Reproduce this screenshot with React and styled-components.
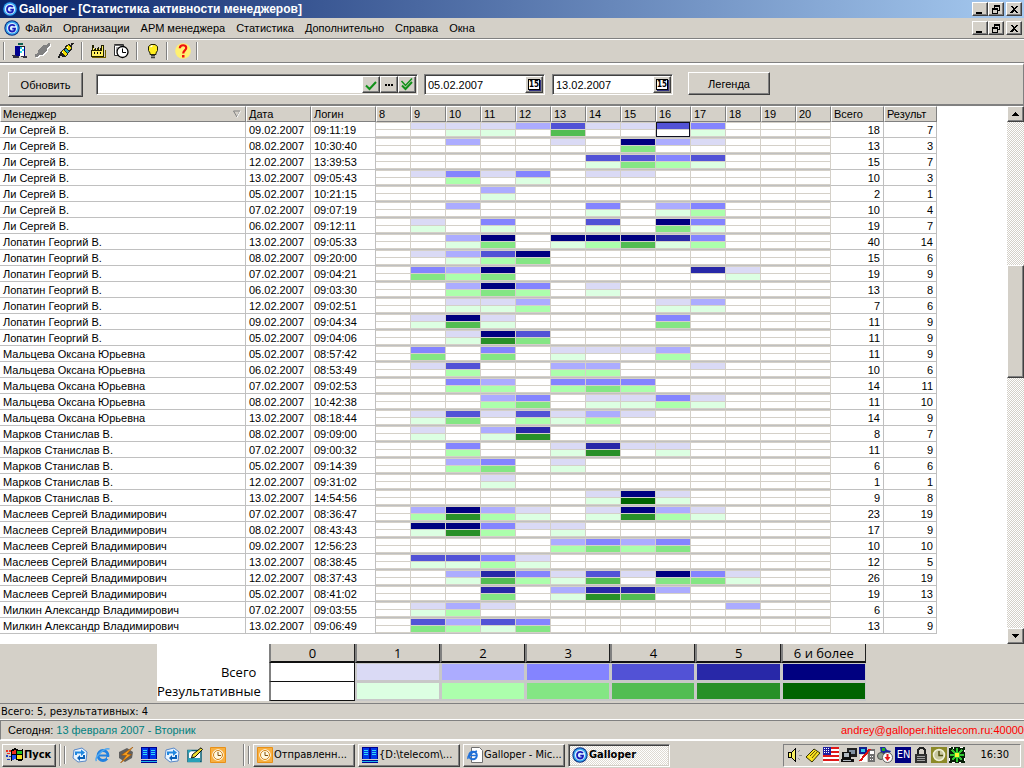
import React from 'react';
import styled, { createGlobalStyle, css } from 'styled-components';

const FACE = '#d4d0c8';
const SHADOW = '#808080';
const DARK = '#404040';
const UI = '"Liberation Sans", Arial, sans-serif';
const TAHOMA = '"DejaVu Sans Condensed", "DejaVu Sans", Tahoma, sans-serif';
const SMOOTH = '"Open Sans", "Noto Sans", sans-serif';

const BLUES = ['#ffffff', '#dadaf5', '#acacff', '#8484ff', '#5252d6', '#2828a8', '#000080'];
const GREENS = ['#ffffff', '#dcffe2', '#acffac', '#84e684', '#52bd52', '#289028', '#006400'];

const Global = createGlobalStyle`
  *, *::before, *::after { box-sizing: border-box; }
  body { margin: 0; background: ${FACE}; color: #000; font: 11px/14px ${UI}; }
  button, input { font: inherit; color: inherit; border-radius: 0; }
  a { color: inherit; text-decoration: none; }
  svg { display: block; flex: none; }
`;

const raised = css`
  border: 1px solid;
  border-color: #fff ${DARK} ${DARK} #fff;
  box-shadow: inset -1px -1px 0 ${SHADOW};
`;
const sunken = css`
  border: 1px solid;
  border-color: ${SHADOW} #fff #fff ${SHADOW};
  box-shadow: inset 1px 1px 0 ${DARK}, inset -1px -1px 0 ${FACE};
`;

const Shell = styled.div`
  min-height: 100vh;
  display: flex;
  flex-direction: column;
  background: ${FACE};
`;
const TitleBar = styled.header`
  height: 18px;
  display: flex;
  align-items: center;
  gap: 1px;
  padding: 0 2px;
  background: linear-gradient(90deg, #0a246a, #a6caf0);
  color: #fff;
`;
const TitleText = styled.h1`
  flex: 1;
  margin: 0;
  font: bold 12px/16px ${UI};
  white-space: nowrap;
`;
const MenuBar = styled.nav`
  height: 21px;
  display: flex;
  align-items: center;
  padding: 0 2px 0 4px;
  border-bottom: 1px solid ${SHADOW};
`;
const MenuItems = styled.div`
  flex: 1;
  display: flex;
  gap: 11px;
  padding-left: 5px;
  white-space: nowrap;
`;
const MenuItem = styled.button`
  padding: 0;
  border: 0;
  background: none;
`;
const WindowButtons = styled.div`
  display: flex;
`;
const WindowButton = styled.button`
  ${raised}
  width: 16px;
  height: 14px;
  padding: 0;
  margin-left: ${(p) => (p.$apart ? '2px' : '0')};
  display: grid;
  place-items: center;
  background: ${FACE};
`;
const ToolBar = styled.div`
  height: 24px;
  display: flex;
  align-items: center;
  gap: 7px;
  padding: 0 3px;
  border-top: 1px solid #fff;
  border-bottom: 1px solid ${SHADOW};
`;
const ToolButton = styled.button`
  width: ${(p) => p.$w || 16}px;
  height: 16px;
  padding: 0;
  border: 0;
  background: none;
  display: grid;
  place-items: center;
`;
const Divider = styled.span`
  width: 2px;
  height: ${(p) => p.$h || 18}px;
  border-left: 1px solid ${SHADOW};
  border-right: 1px solid #fff;
`;
const FilterPanel = styled.form`
  height: 43px;
  display: flex;
  align-items: flex-start;
  padding: 7px 8px 0;
  border-top: 2px solid #fff;
  border-right: 1px solid ${SHADOW};
  border-bottom: 2px solid ${SHADOW};
`;
const PushButton = styled.button`
  ${raised}
  height: ${(p) => p.$h}px;
  width: ${(p) => p.$w}px;
  padding: 0;
  background: ${FACE};
`;
const Field = styled.div`
  ${sunken}
  display: flex;
  width: ${(p) => p.$w}px;
  height: 21px;
  padding: 1px;
  margin-top: 2px;
  margin-left: ${(p) => p.$gap}px;
  background: #fff;
`;
const TextBox = styled.input`
  flex: 1;
  min-width: 0;
  padding: 0 2px;
  border: 0;
  outline: 0;
  background: transparent;
`;
const FieldButton = styled.button`
  ${raised}
  width: 18px;
  padding: 0;
  display: grid;
  place-items: center;
  background: ${FACE};
`;
const FilterGap = styled.span`
  width: 15px;
`;

const Body = styled.main`
  flex: 1;
  display: flex;
  background: #fff;
`;
const GridArea = styled.div`
  flex: 1;
  min-width: 0;
  overflow: hidden;
  padding-bottom: 9px;
`;
const Grid = styled.table`
  table-layout: fixed;
  width: 937px;
  border-collapse: separate;
  border-spacing: 0;
`;
const Th = styled.th`
  height: 16px;
  padding: 0 2px;
  text-align: left;
  font-weight: normal;
  line-height: 14px;
  white-space: nowrap;
  background: ${FACE};
  border-top: 1px solid #fff;
  border-left: 1px solid #fff;
  border-right: 1px solid ${SHADOW};
  border-bottom: 1px solid ${SHADOW};
`;
const ThInner = styled.span`
  display: flex;
  justify-content: space-between;
  align-items: center;
  padding-right: 2px;
`;
const Td = styled.td`
  height: 16px;
  padding: 1px 3px 0;
  text-align: ${(p) => (p.$num ? 'right' : 'left')};
  line-height: 14px;
  white-space: nowrap;
  border-right: 1px solid #c0c0c0;
  border-bottom: 1px solid #c0c0c0;
`;
const HourTd = styled.td`
  height: 16px;
  padding: 0;
  border-right: 1px solid ${FACE};
  border-bottom: 1px solid #c0c0c0;
`;
const Meter = styled.div`
  height: 15px;
  display: grid;
  grid-template-rows: 6px 6px;
  row-gap: 1px;
  padding: 1px 0;
  background: ${FACE};
  ${(p) => p.$active && css`outline: 1px solid #101020; outline-offset: -1px;`}
`;
const Bar = styled.span`
  background: ${(p) => p.$fill};
`;

const ScrollBar = styled.div`
  width: 17px;
  display: flex;
  flex-direction: column;
  background: repeating-conic-gradient(#fff 0 25%, ${FACE} 0 50%) 0 0 / 2px 2px;
`;
const ScrollButton = styled.button`
  ${raised}
  height: 16px;
  padding: 0;
  display: grid;
  place-items: center;
  background: ${FACE};
`;
const Thumb = styled.div`
  ${raised}
  flex: 111;
  background: ${FACE};
`;
const Space = styled.div`
  flex: ${(p) => p.$grow || 1};
`;

const LegendPanel = styled.section`
  padding: 0 0 2px 157px;
`;
const LegendTable = styled.table`
  table-layout: fixed;
  width: 709px;
  border-collapse: separate;
  border-spacing: 0;
  font: 13px/16px ${SMOOTH};
`;
const LegendHead = styled.th`
  height: 19px;
  padding: 0;
  font-weight: normal;
  background: ${FACE};
  border-left: 2px solid ${SHADOW};
  border-right: 1px solid #202020;
  border-bottom: 2px solid #101010;
`;
const LegendCorner = styled.td`
  padding: 0;
  background: #fff;
`;
const LegendLabel = styled.th`
  height: 19px;
  padding: 0 13px 2px 0;
  text-align: right;
  font-weight: normal;
  background: #fff;
`;
const Swatch = styled.td`
  height: 19px;
  padding: 0;
  background: ${(p) => p.$fill};
  border: solid #c8c8c8;
  border-width: 1px 1px 2px 2px;
  ${(p) => p.$empty && css`border-color: ${SHADOW} #101010 #101010 ${SHADOW}; border-width: 0 1px 1px 2px;`}
`;

const StatusLine = styled.div`
  height: 17px;
  padding: 1px 1px;
  border-top: 1px solid ${SHADOW};
  border-bottom: 1px solid #fff;
  font: 11px/14px ${TAHOMA};
`;
const StatusBar = styled.footer`
  height: 20px;
  display: flex;
  justify-content: space-between;
  align-items: center;
  padding: 0 0 0 7px;
  border-top: 1px solid ${SHADOW};
  border-left: 1px solid ${SHADOW};
  border-bottom: 1px solid #fff;
`;
const Today = styled.time`
  color: #008080;
`;
const Server = styled.a`
  color: #ff0000;
`;
const TaskBar = styled.footer`
  height: 28px;
  display: flex;
  align-items: center;
  gap: 3px;
  padding: 1px 3px 0 2px;
  border-top: 1px solid #fff;
`;
const StartButton = styled.button`
  ${raised}
  width: 54px;
  height: 23px;
  display: flex;
  align-items: center;
  gap: 1px;
  padding: 0 3px;
  background: ${FACE};
  font: bold 11px/14px ${TAHOMA};
`;
const Quick = styled.div`
  display: flex;
  gap: 7px;
  padding: 0 14px 0 3px;
`;
const Tasks = styled.div`
  flex: 1;
  display: flex;
  gap: 3px;
`;
const Task = styled.button`
  ${raised}
  width: 102px;
  height: 23px;
  display: flex;
  align-items: center;
  gap: 1px;
  padding: 0 3px;
  overflow: hidden;
  white-space: nowrap;
  background: ${FACE};
  font: 11px/14px ${TAHOMA};
  ${(p) => p.$active && css`
    ${sunken}
    font-weight: bold;
    background: repeating-conic-gradient(#fff 0 25%, #dedad2 0 50%) 0 0 / 2px 2px;
  `}
`;
const Tray = styled.div`
  height: 23px;
  display: flex;
  align-items: center;
  gap: 2px;
  padding: 0 11px 0 3px;
  border: 1px solid;
  border-color: ${SHADOW} #fff #fff ${SHADOW};
`;
const Lang = styled.span`
  width: 16px;
  height: 16px;
  background: #000080;
  color: #fff;
  font: 11px/16px ${TAHOMA};
  text-align: center;
`;
const Clock = styled.time`
  padding-left: 13px;
  font: 11px/14px ${TAHOMA};
`;

function Svg({ children, crisp = true }) {
  return (
    <svg width="16" height="16" viewBox="0 0 16 16" shapeRendering={crisp ? 'crispEdges' : 'auto'} aria-hidden="true">
      {children}
    </svg>
  );
}
const Logo = () => (
  <Svg crisp={false}>
    <circle cx="8" cy="8" r="7.7" fill="#082a80" />
    <circle cx="8" cy="8" r="6.7" fill="#38a8f0" />
    <circle cx="8" cy="8" r="5.2" fill="#d8f0ff" />
    <path d="M10.800 6.200C10 4.600 6.400 4.300 5.300 6.600C4.300 9 5.600 11.500 8 11.500C10 11.500 11 10.500 11 8.700H8.300" fill="none" stroke="#1818b8" strokeWidth="1.800" />
  </Svg>
);
const Door = () => (
  <Svg>
    <path d="M6 0h5v2H6z" fill="#106050" />
    <path d="M3 3h10v1H3z" fill="#202020" />
    <path d="M3 3h5v10H3z" fill="#000090" />
    <path d="M8 4h4v9H8z" fill="#fff" />
    <path d="M8 4h2v2H8zM10 6h2v2h-2zM8 8h2v2H8z" fill="#30d0e8" />
    <path d="M12 4h1v10h-1z" fill="#000090" />
    <path d="M0 12h4v1H0zM1 13h6v2H1zM9 13h6v1H9zM11 14h4v1h-4z" fill="#303040" />
  </Svg>
);
const PlugOff = () => (
  <Svg>
    <path d="M1 15v-3l3-1V8l5-5h3l3-2h1v2l-3 3v3l-5 4H5l-2 2z" fill="#fff" />
    <path d="M0 14v-3l3-1V7l5-5h3l3-2h1v2l-3 3v3l-5 4H4l-2 2z" fill="#808080" />
  </Svg>
);
const Plug = () => (
  <Svg>
    <path d="M0 15l3-4M12 4l3-4" stroke="#202020" strokeWidth="2" />
    <path d="M2 10l3-4 2-1 1-3 3-1 3 3v3l-3 2-1 3-3 2H4z" fill="#202020" />
    <path d="M3 9l2-2 4 4-2 2zM8 4l2-2 3 3-2 3z" fill="#f0e000" />
    <path d="M6 7l2-2 3 4-2 1z" fill="#20a8b8" />
    <path d="M4 9h1v1H4zM9 4h1v1H9z" fill="#fff" />
  </Svg>
);
const Factory = () => (
  <Svg>
    <path d="M2 2h2v4l2-2v2l3-2v2l2-1V2h3v12H1V7h1z" fill="#202000" />
    <path d="M2 8h11v5H2zM3 5h1v2H3zM6 6h1v1H6zM9 6h1v1H9zM12 3h1v5h-1z" fill="#fff060" />
    <path d="M4 9h1v2H4zM7 9h1v2H7zM10 9h1v2h-1z" fill="#000" />
    <path d="M2 14h13V7" fill="none" stroke="#706000" />
  </Svg>
);
const Schedule = () => (
  <Svg crisp={false}>
    <path d="M1.500 1.500h9v11h-9z" fill="#fff" stroke="#303030" />
    <path d="M1 2.500h9M3 5h5M3 7h4" stroke="#606060" />
    <circle cx="9.500" cy="9" r="5.500" fill="#fff" stroke="#000" strokeWidth="1.300" />
    <path d="M9.500 5.500V9.500H13" fill="none" stroke="#000" />
  </Svg>
);
const Bulb = () => (
  <Svg crisp={false}>
    <path d="M5 10L3.500 7.500V3.500L6 1.500h4l2.500 2v4L11 10v1.500H5z" fill="#ffee20" stroke="#202000" />
    <path d="M5.500 4l2-1.500" stroke="#fff" strokeWidth="1.500" />
    <path d="M6 12.500h4M6 14.500h4" stroke="#404040" strokeWidth="1.500" />
  </Svg>
);
const Help = () => (
  <Svg crisp={false}>
    <circle cx="8" cy="8" r="7.800" fill="#fff070" />
    <path d="M4.800 5.200C5 1.300 11.400 1.300 11.200 5C11.100 7.500 8.200 7.200 8.200 10.500" fill="none" stroke="#f01010" strokeWidth="2.200" />
    <path d="M7 12h2.500v2.500H7z" fill="#f01010" />
  </Svg>
);
const Check = ({ twice }) => (
  <Svg crisp={false}>
    <path d="M3 8.500L6.500 12L13 5" fill="none" stroke="#109018" strokeWidth="2" />
    {twice && <path d="M2.500 4l4 4.500L13 1.500" fill="none" stroke="#109018" strokeWidth="1.500" />}
  </Svg>
);
const Dots = () => (
  <Svg><path d="M4 7h2v2H4zM7 7h2v2H7zM10 7h2v2h-2z" fill="#000" /></Svg>
);
const CalIcon = styled.span`
  width: 12px;
  height: 11px;
  background: #fff;
  border: 1px solid #000;
  box-shadow: 1px 1px 0 #303080;
  font: bold 8px/9px ${TAHOMA};
  text-align: center;
`;
const Glyph = ({ kind }) => (
  <svg width="10" height="9" viewBox="0 0 10 9" shapeRendering="crispEdges" aria-hidden="true">
    {kind === 'min' && <path d="M1 7h6v2H1z" />}
    {kind === 'restore' && (
      <path d="M3 0h6v6H7V5h1V2H4v1H3zM1 3h6v6H1zM2 5v3h4V5z" fillRule="evenodd" />
    )}
    {kind === 'close' && <path d="M1 1h2l2 2 2-2h2L6 4l3 4H7L5 6 3 8H1l3-4z" />}
    {kind === 'up' && <path d="M1 6h7v-1H7v-1H6V3H5V2H4v1H3v1H2v1H1z" />}
    {kind === 'down' && <path d="M1 2h7v1H7v1H6v1H5v1H4V5H3V4H2V3H1z" />}
  </svg>
);
const WindowsFlag = () => (
  <svg width="17" height="16" viewBox="0 0 17 16" shapeRendering="crispEdges" aria-hidden="true">
    <path d="M5 3q4-3 6-1t6 0v11q-3 2-6 0t-6 1z" fill="#000" />
    <path d="M6 4l4-1v4H6z" fill="#f03020" /><path d="M11 4h5v3h-5z" fill="#20c020" />
    <path d="M6 8h4v4l-4 1z" fill="#2050f0" /><path d="M11 8h5v4h-5z" fill="#f8e020" />
    <path d="M0 3h2v2H0zM3 3h2v2H3zM1 6h3v1H1z" fill="#f03020" />
    <path d="M0 8h2v2H0zM3 9h2v1H3zM1 12h3v1H1z" fill="#2040c0" />
  </svg>
);
const Sync = () => (
  <Svg crisp={false}>
    <path d="M2 3l8-2 5 4-1 9-8 1-5-4z" fill="#e8f4ff" stroke="#5888c8" />
    <path d="M3 8V4.500h6V2.500l4 3L9 9V6.500H5V8z" fill="#2088e0" />
    <path d="M13 8v4H8v2L5 11l3-3v2h3V8z" fill="#0860b8" />
  </Svg>
);
const Explorer = () => (
  <Svg crisp={false}>
    <circle cx="8" cy="8.500" r="5" fill="none" stroke="#2080e0" strokeWidth="2.800" />
    <path d="M4 8.500h9" stroke="#2080e0" strokeWidth="2" />
    <path d="M12 10h4v2h-4z" fill={FACE} />
    <path d="M1.500 14C-1 11 9 0 14.500 2" fill="none" stroke="#50a8f0" strokeWidth="1.500" />
  </Svg>
);
const Winamp = () => (
  <Svg crisp={false}>
    <path d="M1 5l8-4 6 4-1 6-7 4-6-4z" fill="#606060" />
    <path d="M15 0L3.500 8l5 .5L2.500 16L13.500 7.500L9 7z" fill="#f8a020" stroke="#a05000" strokeWidth=".6" />
  </Svg>
);
const Commander = () => (
  <Svg>
    <path d="M0 0h16v12H0zM0 13h16v3H0z" fill="#000090" />
    <path d="M1 1h6v11H1zM9 1h6v11H9z" fill="#0038e8" />
    <path d="M2 3h4M2 5h4M2 7h4M10 3h4M10 5h4M10 7h4" stroke="#30d8f8" />
    <path d="M0 14h16" stroke="#20b8e8" />
  </Svg>
);
const Editor = () => (
  <Svg crisp={false}>
    <path d="M1 3.500h13v11H1z" fill="#fff" stroke="#086078" strokeWidth="1.500" />
    <path d="M1 11h12v4H1zM1 3l4 0-4 4z" fill="#28a0b8" />
    <path d="M4.500 11l1-3.500L14 .8 15.500 2.500 8 10z" fill="#f0e030" stroke="#101010" />
  </Svg>
);
const Outlook = () => (
  <Svg crisp={false}>
    <path d="M.5.500h15v15H.5z" fill="#f8b040" stroke="#e89018" />
    <circle cx="8" cy="8" r="5" fill="#fff8e0" stroke="#fff" strokeWidth="1.500" />
    <circle cx="8" cy="8" r="4.500" fill="none" stroke="#d08010" />
    <path d="M8 5v3.500h3" fill="none" stroke="#805010" />
  </Svg>
);
const IePage = () => (
  <Svg crisp={false}>
    <path d="M4.500.500h8l3 3v12h-11z" fill="#fff" stroke="#707070" />
    <circle cx="6" cy="8.500" r="3.800" fill="none" stroke="#2070d8" strokeWidth="2" />
    <path d="M3 8.500h7M1 12Q0 7 10 4" stroke="#2070d8" strokeWidth="1.400" fill="none" />
  </Svg>
);
const Speaker = () => (
  <Svg>
    <path d="M1 5h3l5-5v16l-5-5H1z" fill="#000" />
    <path d="M2 6h2v4H2zM5 5l3-3v12l-3-3z" fill="#f8f060" />
    <path d="M11 5l2-2M12 8h3M11 11l2 2" stroke="#909090" />
  </Svg>
);
const Note = () => (
  <Svg crisp={false}>
    <path d="M1 10L9 2l6 4-8 9z" fill="#f8e020" stroke="#303000" />
    <path d="M5 9l5-5M7 11l5-6" stroke="#605000" />
  </Svg>
);
const Flag = () => (
  <Svg>
    <path d="M0 0h16v16H0z" fill="#fff" />
    <path d="M0 1h16M0 5h16M0 9h16M0 13h16" stroke="#e01818" strokeWidth="2" />
    <path d="M0 0h8v8H0z" fill="#2020a0" />
    <path d="M1 1.500h6M1 3.500h6M1 5.500h6" stroke="#fff" strokeDasharray="1 1" />
  </Svg>
);
const Network = () => (
  <Svg>
    <path d="M6 1h10v9H6z" fill="#202020" /><path d="M8 3h6v4H8z" fill="#8090a0" />
    <path d="M1 5h9v7H1zM0 12h13v3H0z" fill="#101010" />
    <path d="M3 6h5v4H3zM2 13h8v1H2z" fill="#b0b8c0" />
  </Svg>
);
const NetOff = () => (
  <Svg>
    <path d="M0 0h8v7H0z" fill="#102090" /><path d="M2 2h4v3H2z" fill="#30c8e8" />
    <path d="M9 2h7v13H9z" fill="#707070" /><path d="M11 4h4v3h-4zM11 9h1v1h-1zM13 9h1v1h-1zM11 12h1v1h-1zM13 12h1v1h-1z" fill="#fff" />
    <path d="M1 8h7v7H1z" fill="#fff" />
    <path d="M1 14L11 2" stroke="#e01010" strokeWidth="2" />
  </Svg>
);
const Agent = () => (
  <Svg crisp={false}>
    <path d="M3 0h5l2 3 4 1-2 3H4z" fill="#1828a0" /><path d="M5 1h3v3H5z" fill="#20b020" />
    <circle cx="4" cy="9" r="3.500" fill="#90a090" stroke="#505050" />
    <circle cx="10.500" cy="10.500" r="5" fill="#fff" stroke="#606060" />
    <path d="M9.500 7h2v3h2l-3 4-3-4h2z" fill="#e81818" />
  </Svg>
);
const Lock = () => (
  <Svg>
    <path d="M5 7V3l2-2h3l2 2v4" fill="none" stroke="#202020" strokeWidth="2" />
    <path d="M2 7h12v9H2z" fill="#303030" />
    <path d="M4 9.500h8M4 11.500h8M4 13.500h8" stroke="#a0a0a0" />
  </Svg>
);
const TrayClock = () => (
  <Svg crisp={false}>
    <path d="M0 0h16v16H0z" fill="#8c8a28" />
    <circle cx="8" cy="8" r="5.500" fill="#c8c8a0" stroke="#f0f0d8" strokeWidth="1.500" />
    <path d="M8 4v4.500h4" fill="none" stroke="#505010" strokeWidth="1.500" />
  </Svg>
);
const Icq = () => (
  <Svg>
    <path d="M0 0h16v16H0z" fill="#082008" />
    <path d="M8 1v14M1 8h14M3 3l10 10M13 3L3 13" stroke="#30c830" strokeWidth="2" />
    <path d="M6 6h4v4H6z" fill="#f8f830" />
    <path d="M0 0h2v1H0zM4 0h1v2H4zM11 0h3v1h-3zM15 3h1v2h-1zM0 11h1v3H0zM3 15h3v1H3zM15 11h1v3h-1zM10 15h2v1h-2z" fill="#fff" />
  </Svg>
);
const SortMark = () => (
  <svg width="8" height="8" viewBox="0 0 8 8" aria-hidden="true">
    <path d="M.5 1h6.500L4 7z" fill="none" stroke="#808080" />
    <path d="M4 7.500L7.500 1" stroke="#fff" />
  </svg>
);

const LEE = 'Ли Сергей В.';
const LOP = 'Лопатин Георгий В.';
const MAL = 'Мальцева Оксана Юрьевна';
const MAR = 'Марков Станислав В.';
const MAS = 'Маслеев Сергей Владимирович';
const MIL = 'Милкин Александр Владимирович';

// manager, day of February 2007, login time, calls per hour 8-20, successful per hour, totals
const ROWS = [
  [LEE, '09', '09:11:19', '0111241143000', '0011040001000', 18, 7],
  [LEE, '08', '10:30:40', '0020010621000', '0000000300000', 13, 3],
  [LEE, '12', '13:39:53', '0000004434000', '0000001321000', 15, 7],
  [LEE, '13', '09:05:43', '0131301100000', '0020100000000', 10, 3],
  [LEE, '05', '10:21:15', '0002000000000', '0001000000000', 2, 1],
  [LEE, '07', '09:07:19', '0020003023000', '0000001012000', 10, 4],
  [LEE, '06', '09:12:11', '0103004063000', '0101001031000', 19, 7],
  [LOP, '13', '09:05:33', '0026066653000', '0013012412000', 40, 14],
  [LOP, '08', '09:20:00', '0124600000000', '0012300000000', 15, 6],
  [LOP, '07', '09:04:21', '0326000005100', '0323000000100', 19, 9],
  [LOP, '06', '09:03:30', '0026301000000', '0023201000000', 13, 8],
  [LOP, '12', '09:02:51', '0011200012000', '0011200011000', 7, 6],
  [LOP, '09', '09:04:34', '0161000030000', '0141000030000', 11, 9],
  [LOP, '05', '09:04:06', '0016400000000', '0015300000000', 11, 9],
  [MAL, '05', '08:57:42', '0303011120000', '0303010020000', 11, 9],
  [MAL, '06', '08:53:49', '0140022001000', '0020022000000', 10, 6],
  [MAL, '07', '09:02:53', '0032033300000', '0022023200000', 14, 11],
  [MAL, '08', '10:42:38', '0002301131000', '0002301121000', 11, 10],
  [MAL, '13', '08:18:44', '0141412100000', '0130212000000', 14, 9],
  [MAR, '08', '09:09:00', '0102500000000', '0101500000000', 8, 7],
  [MAR, '07', '09:00:32', '0030015110000', '0020015010000', 11, 9],
  [MAR, '05', '09:14:39', '0023010000000', '0023010000000', 6, 6],
  [MAR, '12', '09:31:02', '0001000000000', '0001000000000', 1, 1],
  [MAR, '13', '14:54:56', '0000001610000', '0000001610000', 9, 8],
  [MAS, '07', '08:36:47', '0262101621000', '0252101521000', 23, 19],
  [MAS, '08', '08:43:43', '0663110000000', '0152010000000', 17, 9],
  [MAS, '09', '12:56:23', '0000023230000', '0000023230000', 10, 10],
  [MAS, '13', '08:38:45', '0443100000000', '0112100000000', 12, 5],
  [MAS, '12', '08:37:43', '0025314163100', '0014214033100', 26, 19],
  [MAS, '05', '08:41:02', '0005025520000', '0003015400000', 19, 13],
  [MIL, '07', '09:03:55', '0121000000200', '0120000000000', 6, 3],
  [MIL, '13', '09:06:49', '0424300000000', '0321300000000', 13, 9],
];
const HOURS = Array.from({ length: 13 }, (_, i) => i + 8);
const MENU = ['Файл', 'Организации', 'АРМ менеджера', 'Статистика', 'Дополнительно', 'Справка', 'Окна'];
const LEGEND = ['0', '1', '2', '3', '4', '5', '6 и более'];

function Caption() {
  return (
    <WindowButtons>
      <WindowButton aria-label="Свернуть"><Glyph kind="min" /></WindowButton>
      <WindowButton aria-label="Восстановить"><Glyph kind="restore" /></WindowButton>
      <WindowButton aria-label="Закрыть" $apart><Glyph kind="close" /></WindowButton>
    </WindowButtons>
  );
}

function DateField({ value, label, gap }) {
  return (
    <Field $w={121} $gap={gap}>
      <TextBox aria-label={label} defaultValue={value} />
      <FieldButton type="button" aria-label="Календарь"><CalIcon>15</CalIcon></FieldButton>
    </Field>
  );
}

function ActivityGrid() {
  return (
    <Grid>
      <colgroup>
        <col width="246" />
        <col width="65" />
        <col width="65" />
        {HOURS.map((h) => <col key={h} width="35" />)}
        <col width="53" />
        <col width="53" />
      </colgroup>
      <thead>
        <tr>
          <Th><ThInner>Менеджер<SortMark /></ThInner></Th>
          <Th>Дата</Th>
          <Th>Логин</Th>
          {HOURS.map((h) => <Th key={h}>{h}</Th>)}
          <Th>Всего</Th>
          <Th>Результ</Th>
        </tr>
      </thead>
      <tbody>
        {ROWS.map(([name, day, login, all, good, total, result], r) => (
          <tr key={r}>
            <Td>{name}</Td>
            <Td>{day}.02.2007</Td>
            <Td>{login}</Td>
            {HOURS.map((h, i) => (
              <HourTd key={h}>
                <Meter $active={r === 0 && h === 16}>
                  <Bar $fill={BLUES[all[i]]} />
                  <Bar $fill={GREENS[good[i]]} />
                </Meter>
              </HourTd>
            ))}
            <Td $num>{total}</Td>
            <Td $num>{result}</Td>
          </tr>
        ))}
      </tbody>
    </Grid>
  );
}

function Legend() {
  return (
    <LegendPanel>
      <LegendTable>
        <colgroup>
          <col width="112" />
          {LEGEND.map((l) => <col key={l} width="85" />)}
        </colgroup>
        <thead>
          <tr>
            <LegendCorner />
            {LEGEND.map((l) => <LegendHead key={l}>{l}</LegendHead>)}
          </tr>
        </thead>
        <tbody>
          <tr>
            <LegendLabel>Всего</LegendLabel>
            {BLUES.map((c, i) => <Swatch key={c} $fill={c} $empty={i === 0} />)}
          </tr>
          <tr>
            <LegendLabel>Результативные</LegendLabel>
            {GREENS.map((c, i) => <Swatch key={c} $fill={c} $empty={i === 0} />)}
          </tr>
        </tbody>
      </LegendTable>
    </LegendPanel>
  );
}

export default function App() {
  return (
    <Shell>
      <Global />
      <TitleBar>
        <Logo />
        <TitleText>Galloper - [Статистика активности менеджеров]</TitleText>
        <Caption />
      </TitleBar>
      <MenuBar>
        <Logo />
        <MenuItems>{MENU.map((m) => <MenuItem key={m}>{m}</MenuItem>)}</MenuItems>
        <Caption />
      </MenuBar>
      <ToolBar>
        <Divider />
        <ToolButton aria-label="Выход"><Door /></ToolButton>
        <ToolButton aria-label="Отключить"><PlugOff /></ToolButton>
        <ToolButton aria-label="Подключить"><Plug /></ToolButton>
        <Divider />
        <ToolButton aria-label="Организации"><Factory /></ToolButton>
        <ToolButton aria-label="Расписание"><Schedule /></ToolButton>
        <Divider />
        <ToolButton $w={14} aria-label="Совет"><Bulb /></ToolButton>
        <Divider />
        <ToolButton $w={14} aria-label="Справка"><Help /></ToolButton>
        <Divider />
      </ToolBar>
      <FilterPanel onSubmit={(e) => e.preventDefault()}>
        <PushButton $w={75} $h={25}>Обновить</PushButton>
        <Field $w={322} $gap={13}>
          <TextBox aria-label="Менеджеры" />
          <FieldButton type="button" aria-label="Выбрать"><Check /></FieldButton>
          <FieldButton type="button" aria-label="Список"><Dots /></FieldButton>
          <FieldButton type="button" aria-label="Выбрать все"><Check twice /></FieldButton>
        </Field>
        <DateField value="05.02.2007" label="С даты" gap={6} />
        <DateField value="13.02.2007" label="По дату" gap={7} />
        <FilterGap />
        <PushButton type="button" $w={82} $h={23}>Легенда</PushButton>
      </FilterPanel>
      <Body>
        <GridArea><ActivityGrid /></GridArea>
        <ScrollBar>
          <ScrollButton aria-label="Вверх"><Glyph kind="up" /></ScrollButton>
          <Space $grow={143} />
          <Thumb />
          <Space $grow={251} />
          <ScrollButton aria-label="Вниз"><Glyph kind="down" /></ScrollButton>
        </ScrollBar>
      </Body>
      <Legend />
      <StatusLine>Всего: 5, результативных: 4</StatusLine>
      <StatusBar>
        <span>Сегодня: <Today dateTime="2007-02-13">13 февраля 2007 - Вторник</Today></span>
        <Server href="#server">andrey@galloper.hittelecom.ru:40000</Server>
      </StatusBar>
      <TaskBar>
        <StartButton><WindowsFlag />Пуск</StartButton>
        <Divider $h={22} />
        <Divider $h={18} />
        <Quick>
          <Sync /><Explorer /><Winamp /><Commander /><Sync /><Editor /><Outlook />
        </Quick>
        <Divider $h={22} />
        <Divider $h={18} />
        <Tasks>
          <Task><Outlook />Отправленн...</Task>
          <Task><Commander />{'{D:\\telecom\\...'}</Task>
          <Task><IePage />Galloper - Mic...</Task>
          <Task $active><Logo />Galloper</Task>
        </Tasks>
        <Tray>
          <Speaker /><Note /><Flag /><Network /><NetOff /><Agent />
          <Lang>EN</Lang>
          <Lock /><TrayClock /><Icq />
          <Clock dateTime="16:30">16:30</Clock>
        </Tray>
      </TaskBar>
    </Shell>
  );
}
